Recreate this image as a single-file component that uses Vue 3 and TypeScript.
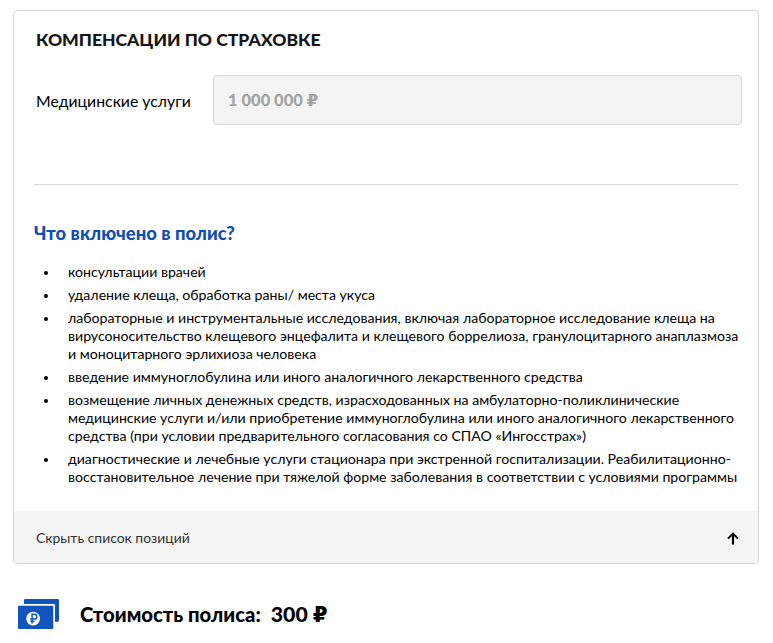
<script setup lang="ts">
const items: string[][] = [
  ['консультации врачей'],
  ['удаление клеща, обработка раны/ места укуса'],
  [
    'лабораторные и инструментальные исследования, включая лабораторное исследование клеща на',
    'вирусоносительство клещевого энцефалита и клещевого боррелиоза, гранулоцитарного анаплазмоза',
    'и моноцитарного эрлихиоза человека',
  ],
  ['введение иммуноглобулина или иного аналогичного лекарственного средства'],
  [
    'возмещение личных денежных средств, израсходованных на амбулаторно-поликлинические',
    'медицинские услуги и/или приобретение иммуноглобулина или иного аналогичного лекарственного',
    'средства (при условии предварительного согласования со СПАО «Ингосстрах»)',
  ],
  [
    'диагностические и лечебные услуги стационара при экстренной госпитализации. Реабилитационно-',
    'восстановительное лечение при тяжелой форме заболевания в соответствии с условиями программы',
  ],
]
</script>

<template>
  <main class="page">
    <section class="card">
      <div class="top">
        <h2 class="title">КОМПЕНСАЦИИ ПО СТРАХОВКЕ</h2>
        <div class="field">
          <span class="label">Медицинские услуги</span>
          <div class="input">1 000 000 ₽</div>
        </div>
      </div>
      <div class="rule"></div>
      <h3 class="subtitle">Что включено в полис?</h3>
      <ul class="list">
        <li v-for="(item, i) in items" :key="i" class="item">
          <span class="dot"></span>
          <div>
            <div v-for="(line, j) in item" :key="j" class="line">{{ line }}</div>
          </div>
        </li>
      </ul>
      <div class="foot">
        <span>Скрыть список позиций</span>
        <svg class="arrow" width="12" height="13" viewBox="0 0 12 13" fill="none" stroke="#000" aria-hidden="true">
          <path d="M6 12.500V2" stroke-width="2.200" />
          <path d="M1 6.600 6 1.600l5 5" stroke-width="2" />
        </svg>
      </div>
    </section>
    <div class="price">
      <svg class="money" width="42" height="31" viewBox="0 0 42 31" aria-hidden="true">
        <path d="M6 1.200A1.200 1.200 0 0 1 7.200 0H39.800A1.200 1.200 0 0 1 41 1.200V21.500a1.200 1.200 0 0 1-1.200 1.200H37V6.200A1.200 1.200 0 0 0 35.800 5H6Z" fill="#0f55bd" />
        <rect x="0" y="6.700" width="35.300" height="23.300" rx="1.200" fill="#0f55bd" />
        <circle cx="15.100" cy="19.700" r="6.900" fill="#fff" />
        <path d="M14.100 24.500V15.300h2.300a2.400 2.400 0 0 1 0 4.800h-4M12.400 22.300h4" fill="none" stroke="#0f55bd" stroke-width="1.500" />
      </svg>
      <strong class="price-label">Стоимость полиса:</strong>
      <strong class="price-value">300 ₽</strong>
    </div>
  </main>
</template>

<style scoped>
.page {
  width: 773px;
  height: 643px;
  overflow: hidden;
  box-sizing: border-box;
  padding: 10px 14px 0 13px;
  font-family: Lato, "Open Sans", "DejaVu Sans", sans-serif;
  color: #000;
  background: #fff;
}
.card {
  box-sizing: border-box;
  height: 554px;
  border: 1px solid #d6d6d6;
  border-radius: 4px;
  display: flex;
  flex-direction: column;
  overflow: hidden;
}
.top {
  padding: 18px 16px 0 22px;
  height: 173px;
  box-sizing: border-box;
}
.title {
  margin: 0;
  font-size: 17.550px;
  line-height: 22px;
  font-weight: 900;
  color: #151515;
}
.field {
  display: flex;
  align-items: center;
  margin-top: 24px;
}
.label {
  width: 177px;
  font-size: 15.800px;
}
.input {
  flex: 1;
  height: 50px;
  box-sizing: border-box;
  border: 1px solid #d6d6d6;
  border-radius: 4px;
  background: #f4f4f4;
  padding-left: 14px;
  line-height: 48px;
  font-size: 16.500px;
  font-weight: 900;
  color: #a3a3a3;
}
.rule {
  height: 1px;
  margin: 0 20px;
  background: #d8d8d8;
}
.subtitle {
  margin: 37px 0 0 20px;
  font-size: 18.400px;
  line-height: 22px;
  font-weight: 900;
  color: #0f4fb5;
}
.list {
  list-style: none;
  margin: 19px 0 0;
  padding: 0;
  flex: 1;
}
.item {
  display: flex;
  margin-bottom: 5px;
  font-size: 14.130px;
  line-height: 18px;
}
.dot {
  width: 4px;
  height: 4px;
  border-radius: 50%;
  background: #000;
  margin: 8px 20px 0 30px;
  flex: none;
}
.line {
  white-space: nowrap;
}
.foot {
  height: 52px;
  flex: none;
  background: #f4f4f4;
  display: flex;
  align-items: center;
  justify-content: space-between;
  padding: 0 19px 0 22px;
  box-sizing: border-box;
  font-size: 13.950px;
  color: #333;
}
.arrow {
  margin-top: 2px;
}
.price {
  display: flex;
  align-items: center;
  height: 31px;
  margin-top: 35px;
  padding-left: 5px;
}
.money {
  flex: none;
}
.price-label {
  margin: 0 0 2px 20px;
  font-size: 20.300px;
  font-weight: 900;
}
.price-value {
  margin: 0 0 2px 10px;
  font-size: 21.300px;
  font-weight: 900;
}
</style>
<style>
html, body { margin: 0; background: #fff; }
</style>
